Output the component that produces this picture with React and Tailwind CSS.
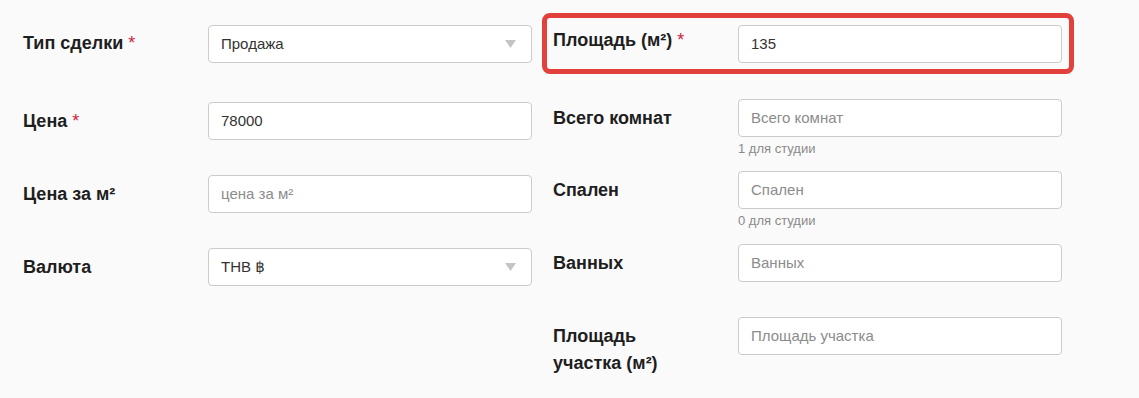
import React from "react";

const font = { fontFamily: '"Liberation Sans", Arial, "DejaVu Sans", sans-serif' };

function Req() {
  return <span className="text-[#cf1f3f] font-normal"> *</span>;
}

function Caret() {
  return (
    <svg width="11" height="8" viewBox="0 0 11 8" className="absolute right-[15px] top-1/2 -translate-y-1/2">
      <path d="M0 0 H11 L5.5 8 Z" fill="#c4c4c4" />
    </svg>
  );
}

function Field({ value, placeholder, select }) {
  return (
    <div className="relative h-[38px] w-[324px] rounded-[4px] border border-[#cccccc] bg-white flex items-center px-3 text-[15px]">
      {value ? (
        <span className="text-[#333333]">{value}</span>
      ) : (
        <span className="text-[#8c8c8c]">{placeholder}</span>
      )}
      {select && <Caret />}
    </div>
  );
}

function Row({ label, children, labelW, pt = "pt-[6px]", className = "" }) {
  return (
    <div className={`flex items-start ${className}`}>
      <div className={`${labelW} ${pt} shrink-0`}>
        <div className="max-w-[150px] text-[18px] leading-[27px] font-bold text-[#1e1e1e]">{label}</div>
      </div>
      <div>{children}</div>
    </div>
  );
}

function Help({ children }) {
  return <div className="mt-[3px] text-[13px] leading-[18px] text-[#8a8a8a]">{children}</div>;
}

export default function App() {
  return (
    <div className="w-[1139px] h-[398px] bg-[#fafafa] overflow-hidden" style={font}>
      <div className="flex pt-[25px] pl-[23px] gap-[21px]">
        {/* Left column */}
        <div className="flex flex-col">
          <Row label={<>Тип сделки<Req /></>} labelW="w-[185px]" pt="pt-[5px]" className="mb-[39px]">
            <Field value="Продажа" select />
          </Row>
          <Row label={<>Цена<Req /></>} labelW="w-[185px]" className="mb-[35px]">
            <Field value="78000" />
          </Row>
          <Row label="Цена за м²" labelW="w-[185px]" className="mb-[35px]">
            <Field placeholder="цена за м²" />
          </Row>
          <Row label="Валюта" labelW="w-[185px]">
            <Field value="THB ฿" select />
          </Row>
        </div>

        {/* Right column */}
        <div className="flex flex-col">
          <div className="relative mb-[36px]">
            <Row label={<>Площадь (м²)<Req /></>} labelW="w-[185px]" pt="pt-[2px]">
              <Field value="135" />
            </Row>
            <div className="pointer-events-none absolute -left-[11px] -top-[12px] -right-[12px] -bottom-[11px] rounded-[8px] border-[5px] border-[#e2403a]" />
          </div>
          <Row label="Всего комнат" labelW="w-[185px]" className="mb-[13px]">
            <Field placeholder="Всего комнат" />
            <Help>1 для студии</Help>
          </Row>
          <Row label="Спален" labelW="w-[185px]" className="mb-[14px]">
            <Field placeholder="Спален" />
            <Help>0 для студии</Help>
          </Row>
          <Row label="Ванных" labelW="w-[185px]" className="mb-[35px]">
            <Field placeholder="Ванных" />
          </Row>
          <Row label="Площадь участка (м²)" labelW="w-[185px]">
            <Field placeholder="Площадь участка" />
          </Row>
        </div>
      </div>
    </div>
  );
}
